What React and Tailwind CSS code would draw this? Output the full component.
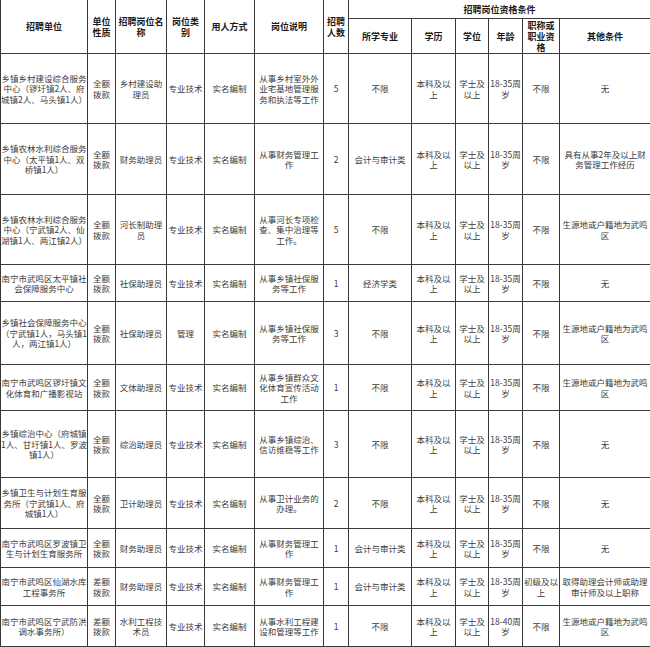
import React from "react";

const widths = [
  "w-[87px]",
  "w-[28px]",
  "w-[51px]",
  "w-[38px]",
  "w-[50px]",
  "w-[69px]",
  "w-[25px]",
  "w-[63px]",
  "w-[44px]",
  "w-[33px]",
  "w-[34px]",
  "w-[37px]",
  "w-[91px]",
];

const heights = [
  "h-[70px]",
  "h-[71px]",
  "h-[70px]",
  "h-[37px]",
  "h-[63px]",
  "h-[46px]",
  "h-[67px]",
  "h-[51px]",
  "h-[39px]",
  "h-[38px]",
  "h-[41px]",
];

const edu = ["本科及以", "上"];
const deg = ["学士及", "以上"];
const age = ["18-35周", "岁"];
const qf = ["全额", "拨款"];
const cf = ["差额", "拨款"];
const local = ["生源地或户籍地为武鸣", "区"];

const rows = [
  [
    ["乡镇乡村建设综合服务", "中心（锣圩镇2人、府", "城镇2人、马头镇1人）"],
    qf,
    ["乡村建设助", "理员"],
    "专业技术",
    "实名编制",
    ["从事乡村室外外", "业宅基地管理服", "务和执法等工作"],
    "5",
    "不限",
    edu,
    deg,
    age,
    "不限",
    "无",
  ],
  [
    ["乡镇农林水利综合服务", "中心（太平镇1人、双", "桥镇1人）"],
    qf,
    "财务助理员",
    "专业技术",
    "实名编制",
    ["从事财务管理工", "作"],
    "2",
    "会计与审计类",
    edu,
    deg,
    age,
    "不限",
    ["具有从事2年及以上财", "务管理工作经历"],
  ],
  [
    ["乡镇农林水利综合服务", "中心（宁武镇2人、仙", "湖镇1人、两江镇2人）"],
    qf,
    ["河长制助理", "员"],
    "专业技术",
    "实名编制",
    ["从事河长专项检", "查、集中治理等", "工作。"],
    "5",
    "不限",
    edu,
    deg,
    age,
    "不限",
    local,
  ],
  [
    ["南宁市武鸣区太平镇社", "会保障服务中心"],
    qf,
    "社保助理员",
    "专业技术",
    "实名编制",
    ["从事乡镇社保服", "务等工作"],
    "1",
    "经济学类",
    edu,
    deg,
    age,
    "不限",
    "无",
  ],
  [
    ["乡镇社会保障服务中心", "（宁武镇1人，马头镇1", "人，两江镇1人）"],
    qf,
    "社保助理员",
    "管理",
    "实名编制",
    ["从事乡镇社保服", "务等工作"],
    "3",
    "不限",
    edu,
    deg,
    age,
    "不限",
    local,
  ],
  [
    ["南宁市武鸣区锣圩镇文", "化体育和广播影视站"],
    qf,
    "文体助理员",
    "专业技术",
    "实名编制",
    ["从事乡镇群众文", "化体育宣传活动", "工作"],
    "1",
    "不限",
    edu,
    deg,
    age,
    "不限",
    local,
  ],
  [
    ["乡镇综治中心（府城镇", "1人、甘圩镇1人、罗波", "镇1人）"],
    qf,
    "综治助理员",
    "专业技术",
    "实名编制",
    ["从事乡镇综治、", "信访维稳等工作"],
    "3",
    "不限",
    edu,
    deg,
    age,
    "不限",
    "无",
  ],
  [
    ["乡镇卫生与计划生育服", "务所（宁武镇1人、府", "城镇1人）"],
    qf,
    "卫计助理员",
    "专业技术",
    "实名编制",
    ["从事卫计业务的", "办理。"],
    "2",
    "不限",
    edu,
    deg,
    age,
    "不限",
    "无",
  ],
  [
    ["南宁市武鸣区罗波镇卫", "生与计划生育服务所"],
    qf,
    "财务助理员",
    "专业技术",
    "实名编制",
    ["从事财务管理工", "作"],
    "1",
    "会计与审计类",
    edu,
    deg,
    age,
    "不限",
    "无",
  ],
  [
    ["南宁市武鸣区仙湖水库", "工程事务所"],
    cf,
    "财务助理员",
    "专业技术",
    "实名编制",
    ["从事财务管理工", "作"],
    "1",
    "会计与审计类",
    edu,
    deg,
    age,
    ["初级及以", "上"],
    ["取得助理会计师或助理", "审计师及以上职称"],
  ],
  [
    ["南宁市武鸣区宁武防洪", "调水事务所）"],
    cf,
    ["水利工程技", "术员"],
    "专业技术",
    "实名编制",
    ["从事水利工程建", "设和管理等工作"],
    "1",
    "不限",
    edu,
    deg,
    ["18-40周", "岁"],
    "不限",
    local,
  ],
];

function Lines({ v }) {
  const arr = Array.isArray(v) ? v : [v];
  return arr.map((l, i) => (
    <React.Fragment key={i}>
      {i > 0 && <br />}
      {l}
    </React.Fragment>
  ));
}

const tdBase =
  "border border-[#3a3a3a] text-center align-middle p-0 whitespace-nowrap overflow-hidden";

function Th({ children, rowSpan, colSpan }) {
  return (
    <th
      rowSpan={rowSpan}
      colSpan={colSpan}
      className={`${tdBase} font-bold text-[9px] leading-[11px] text-[#1a1a1a]`}
    >
      {children}
    </th>
  );
}

export default function App() {
  return (
    <div className="w-[650px] h-[647px] bg-white overflow-hidden font-['Noto_Sans_CJK_SC',sans-serif]">
      <table className="w-[650px] table-fixed border-collapse -mt-px">
        <colgroup>
          {widths.map((w, i) => (
            <col key={i} className={w} />
          ))}
        </colgroup>
        <thead>
          <tr className="h-[19px]">
            <Th rowSpan={2}>招聘单位</Th>
            <Th rowSpan={2}>
              <Lines v={["单位", "性质"]} />
            </Th>
            <Th rowSpan={2}>
              <Lines v={["招聘岗位名", "称"]} />
            </Th>
            <Th rowSpan={2}>
              <Lines v={["岗位类", "别"]} />
            </Th>
            <Th rowSpan={2}>用人方式</Th>
            <Th rowSpan={2}>岗位说明</Th>
            <Th rowSpan={2}>
              <Lines v={["招聘", "人数"]} />
            </Th>
            <Th colSpan={6}>招聘岗位资格条件</Th>
          </tr>
          <tr className="h-[35px]">
            <Th>所学专业</Th>
            <Th>学历</Th>
            <Th>学位</Th>
            <Th>年龄</Th>
            <Th>
              <Lines v={["职称或", "职业资", "格"]} />
            </Th>
            <Th>其他条件</Th>
          </tr>
        </thead>
        <tbody>
          {rows.map((r, ri) => (
            <tr key={ri} className={heights[ri]}>
              {r.map((c, ci) => (
                <td
                  key={ci}
                  className={`${tdBase} text-[8.5px] leading-[10.5px] text-[#3c3c3c]`}
                >
                  <Lines v={c} />
                </td>
              ))}
            </tr>
          ))}
        </tbody>
      </table>
    </div>
  );
}
